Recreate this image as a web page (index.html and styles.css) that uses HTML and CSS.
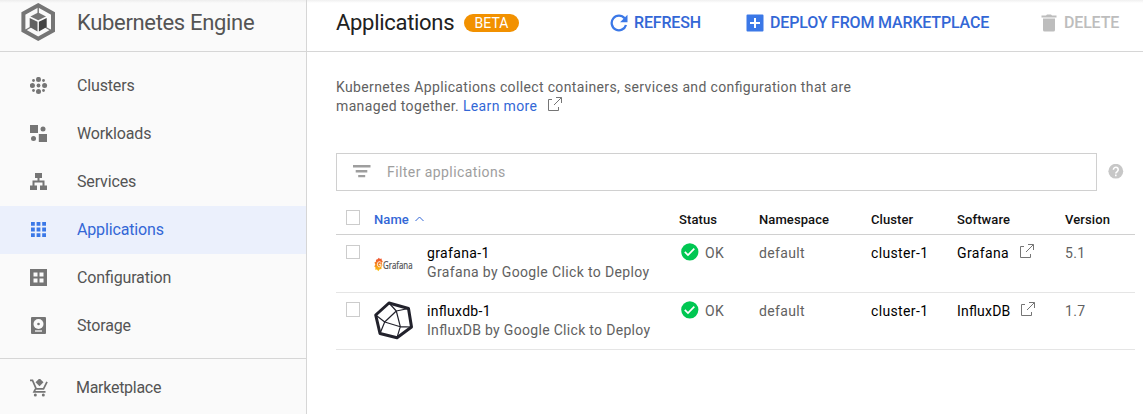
FILE: index.html
```html
<!DOCTYPE html>
<html lang="en">
<head>
<meta charset="utf-8">
<title>Kubernetes Engine</title>
<link rel="stylesheet" href="styles.css">
</head>
<body>
<svg width="0" height="0" class="defs">
  <symbol id="ext" viewBox="0 0 14 14"><path d="M4 2.500H.5v11h10V10M8 .5h5.500V6M13.300.7 6 8" fill="none" stroke="currentColor"/></symbol>
  <symbol id="ok" viewBox="0 0 18 18"><circle cx="8.800" cy="8.800" r="8.600" fill="#00c752"/><path d="m3.800 8.900 3.200 3.200 6.300-6.400" fill="none" stroke="#fff" stroke-width="1.700"/></symbol>
</svg>
<div class="app">
  <aside class="sidebar">
    <div class="product">
      <svg class="product-logo" width="34" height="38" viewBox="0 0 34 38">
        <path d="M17.200 2.300 32 10.500v17L17.200 35.700 2.400 27.500v-17z" fill="none" stroke="#757575" stroke-width="4"/>
        <path d="M17.200 3v8M3 28l7-4M31 28l-7-4" stroke="#757575" stroke-width="1.400"/>
        <path d="m17.200 9.500 7.800 4-7.800 3.800-7.800-3.800z" fill="#757575"/>
        <path d="m8.700 15 7.800 3.800v9.700L8.700 24z" fill="#616161"/>
        <path d="m25.700 15-7.800 3.800v9.700l7.800-4.500z" fill="#424242"/>
      </svg>
      <span class="product-name">Kubernetes Engine</span>
    </div>
    <nav class="nav">
      <a class="item"><svg class="icon" viewBox=".5 .5 18 18"><circle cx="9" cy="2.900" r="2.500"/><circle cx="9" cy="15.100" r="2.500"/><circle cx="2.900" cy="9" r="2.500"/><circle cx="15.100" cy="9" r="2.500"/><circle cx="9" cy="9" r="1.900"/><circle cx="4" cy="4" r="1.400"/><circle cx="14" cy="4" r="1.400"/><circle cx="4" cy="14" r="1.400"/><circle cx="14" cy="14" r="1.400"/></svg><span>Clusters</span></a>
      <a class="item"><svg class="icon" viewBox=".5 .5 18 18"><path d="M.5.500h8v8h-8zM9.300 9.500h8.200v8H9.300z"/><circle cx="13.500" cy="4.500" r="2.500"/><circle cx="4" cy="14" r="2.500"/></svg><span>Workloads</span></a>
      <a class="item"><svg class="icon" viewBox=".5 .5 18 18"><path d="M5.500.5h7v5H10V8h5v5h2.500v4.500h-7V13H13v-3H5v3h2.500v4.500h-7V13H3V8h5V5.500H5.500z"/></svg><span>Services</span></a>
      <a class="item active"><svg class="icon" viewBox=".5 .5 18 18"><path d="M1.500 1.500h3.800v3.800H1.500zM7.100 1.500h3.800v3.800H7.100zM12.700 1.500h3.800v3.800h-3.800zM1.500 7.100h3.800v3.800H1.500zM7.100 7.100h3.800v3.800H7.100zM12.700 7.100h3.800v3.800h-3.800zM1.500 12.700h3.800v3.800H1.500zM7.100 12.700h3.800v3.800H7.100zM12.700 12.700h3.800v3.800h-3.800z"/></svg><span>Applications</span></a>
      <a class="item"><svg class="icon" viewBox=".5 .5 18 18"><path fill-rule="evenodd" d="M.5.500h17v17H.5zM4 4v4h4V4zM10 4v4h4V4zM4 10v4h4v-4zM10 10v4h4v-4z"/></svg><span>Configuration</span></a>
      <a class="item"><svg class="icon" viewBox=".5 .5 18 18"><rect x="1.500" y=".5" width="15" height="17" rx="1"/><circle cx="9" cy="7.500" r="5" fill="#fafafa"/><circle cx="9" cy="7.500" r="1.300"/><path d="M5.500 14.500h7" stroke="#fafafa" stroke-width="1.300"/></svg><span>Storage</span></a>
    </nav>
    <div class="market">
      <a class="item"><svg class="icon" viewBox="0 .7 18 18"><path d="m9.500 0 4 4-4 4-4-4z"/><path d="M0 2h2.500l3.700 8.500h7.300L17 3.500M5.500 10.500 4 13.500h11.500" fill="none" stroke="currentColor" stroke-width="1.700"/><circle cx="5.300" cy="16.700" r="1.500"/><circle cx="13.300" cy="16.700" r="1.500"/></svg><span>Marketplace</span></a>
    </div>
  </aside>
  <main class="main">
    <header class="toolbar">
      <h1 class="title">Applications</h1>
      <span class="beta">BETA</span>
      <button class="action refresh"><svg class="icon" viewBox="0 0 18 18"><path d="M14.600 4.300A7.300 7.300 0 1 0 16 11" fill="none" stroke="currentColor" stroke-width="2.300"/><path d="M17.500.8v7.400h-7.400z"/></svg><span>REFRESH</span></button>
      <button class="action deploy"><svg class="icon" viewBox="0 0 18 18"><path fill-rule="evenodd" d="M1.500.5h15a1 1 0 0 1 1 1v15a1 1 0 0 1-1 1h-15a1 1 0 0 1-1-1v-15a1 1 0 0 1 1-1zM8 4v4H4v2h4v4h2v-4h4V8h-4V4z"/></svg><span>DEPLOY FROM MARKETPLACE</span></button>
      <button class="action delete" disabled><svg class="icon" viewBox="0 0 18 18"><path d="M1.500 1.500h4.500l1-1h4l1 1h4.500v2h-15zM3 4.500h12V16a1.600 1.600 0 0 1-1.600 1.600H4.600A1.600 1.600 0 0 1 3 16z"/></svg><span>DELETE</span></button>
    </header>
    <section class="content">
      <p class="intro">Kubernetes Applications collect containers, services and configuration that are<br>managed together. <a class="learn">Learn more</a><svg class="ext"><use href="#ext"/></svg></p>
      <div class="filter-row">
        <div class="filter"><svg class="icon" viewBox="0 0 18 18"><path d="M0 2h17.500v2.400H0zM2.700 7h11.600v2.400H2.700zM5.200 12h7v2.300h-7z"/></svg><span>Filter applications</span></div>
        <svg class="help" viewBox="0 0 16 16"><circle cx="7.800" cy="7.200" r="7.400" fill="#c7c7c7"/><path d="M5.400 5.700a2.400 2.400 0 1 1 3.700 2C8.100 8.300 7.800 8.600 7.800 9.600" fill="none" stroke="#fff" stroke-width="1.600"/><path d="M7 10.500h1.600v1.700H7z" fill="#fff"/></svg>
      </div>
      <div class="table">
        <div class="row head">
          <i class="check"></i>
          <span class="sorted">Name<svg class="caret" viewBox="0 0 9 6"><path d="m.5 5 4-4 4 4" fill="none" stroke="currentColor"/></svg></span>
          <span>Status</span><span>Namespace</span><span>Cluster</span><span>Software</span><span>Version</span>
        </div>
        <div class="row first">
          <i class="check"></i>
          <div class="name">
            <svg class="logo" viewBox="0 0 39 39">
              <defs><linearGradient id="flame" x1="0" y1="0" x2="0" y2="1"><stop offset="0" stop-color="#ed4b32"/><stop offset="1" stop-color="#fdc70d"/></linearGradient></defs>
              <g transform="translate(0 -.3) scale(1 1.080)"><path d="m3.500 14.300 1.400-1.300 1 1.200 1.700-.5.2 1.600 1 1-1 1.600.6 2.200-1 1.300.1 2-1.800.3-1.400 1.800-1.300-1.500-1.800.1.300-2L.3 21l1-1.700-.9-1.800 1.500-.7.100-2z" fill="url(#flame)"/>
              <path d="M7.100 17.500c-1-1.600-3.700-1-3.700 1.600 0 3 3.400 3 3.600.7.100-1.300-1.700-1.500-1.800-.1" fill="none" stroke="#fff" stroke-width=".9"/></g>
              <text class="wordmark" x="9" y="24.500" textLength="29.500" lengthAdjust="spacingAndGlyphs">Grafana</text>
            </svg>
            <div><div class="primary">grafana-1</div><div class="vendor">Grafana by Google Click to Deploy</div></div>
          </div>
          <span class="status"><svg class="ok raised"><use href="#ok"/></svg>OK</span>
          <span>default</span><span class="primary">cluster-1</span>
          <span class="primary">Grafana<svg class="ext"><use href="#ext"/></svg></span><span>5.1</span>
        </div>
        <div class="row">
          <i class="check"></i>
          <div class="name">
            <svg class="logo raised" viewBox="0 0 39 39"><g fill="none" stroke="#22222c" stroke-linejoin="round"><path d="M15 2 34.500 7.500 37.500 26 23 36.700 6 32.500 1.700 14z" stroke-width="3"/><path d="M15 2 22.300 10 34.500 7.500M22.300 10 10.700 21 1.700 14M22.300 10 26.300 25.700 37.500 26M10.700 21l15.600 4.700L23 36.700M10.700 21 6 32.500" stroke-width="1.200"/></g></svg>
            <div><div class="primary ligated">influxdb-1</div><div class="vendor ligated">InfluxDB by Google Click to Deploy</div></div>
          </div>
          <span class="status"><svg class="ok raised"><use href="#ok"/></svg>OK</span>
          <span>default</span><span class="primary">cluster-1</span>
          <span class="primary software">InfluxDB<svg class="ext"><use href="#ext"/></svg></span><span>1.7</span>
        </div>
      </div>
    </section>
  </main>
</div>
</body>
</html>
```
FILE: styles.css
```css
* { box-sizing: border-box; }
body { margin: 0; overflow: hidden; background: #fff; color: #616161; font: 14px/19px Roboto, sans-serif; letter-spacing: .36px; font-feature-settings: "liga" 1; }
.defs { position: absolute; }
.app { display: flex; height: 414px; }
.sidebar { width: 307px; flex: none; border-right: 1px solid #d6d6d6; background: linear-gradient(#ededed, #fafafa 3px); }
.product { display: flex; align-items: center; height: 52px; padding: 0 0 7px 21px; border-bottom: 1px solid #d6d6d6; }
.product-logo { flex: none; margin-right: 22px; }
.product-name { font-size: 22px; letter-spacing: -.33px; color: #545454; }
.nav { padding: 10px 0 8px; border-bottom: 1px solid #d6d6d6; }
.item { display: flex; align-items: center; height: 48px; padding-left: 30px; font-size: 16px; letter-spacing: -.15px; color: #545454; }
.item span { padding-bottom: 2px; }
.item .icon { margin-right: 29px; color: #757575; }
.icon { display: block; flex: none; width: 18px; height: 18px; fill: currentColor; }
.item.active { background: #ebf0fc; color: #3367d6; }
.item.active .icon { color: #3b78e7; }
.market { padding-top: 5px; }
.market .item .icon { margin-right: 28px; }
.market .item { letter-spacing: -.28px; }
.main { flex: 1; min-width: 0; }
.toolbar { display: flex; align-items: center; height: 52px; padding: 0 0 7px 29px; border-bottom: 1px solid #d6d6d6; background: linear-gradient(#f0f0f0, #fff 3px); }
.title { margin: 0; width: 118px; font-size: 22px; font-weight: 400; letter-spacing: -.3px; color: #212121; }
.beta { margin: 1px 0 0 10px; width: 55px; height: 18px; border-radius: 9px; background: #f29100; color: #fff; text-align: center; line-height: 18px; letter-spacing: 0; }
.action { display: flex; align-items: center; gap: 6px; padding: 1px 0 0; border: 0; background: none; color: #3367d6; font: 500 16px/20px Roboto, sans-serif; letter-spacing: -.17px; white-space: nowrap; }
.action .icon { color: #3b78e7; }
.refresh { width: 91px; margin-left: 91px; }
.deploy { width: 243px; margin-left: 45px; }
.delete { margin-left: 51px; color: #bdbdbd; }
.delete .icon { color: #bdbdbd; }
.content { padding: 26px 8px 0 29px; }
.intro { margin: 0; height: 75px; color: #616161; }
.learn { color: #3367d6; }
.ext { width: 14px; height: 14px; margin-left: 11px; color: #757575; }
.filter-row { display: flex; align-items: center; }
.filter { display: flex; align-items: center; width: 761px; height: 38px; padding-left: 16px; border: 1px solid #d0d0d0; color: #9e9e9e; letter-spacing: .42px; }
.filter .icon { margin-right: 16px; }
.help { width: 16px; height: 16px; margin-left: 11px; }
.table { width: 799px; }
.row { display: grid; grid-template-columns: 38px 305px 80px 112px 86px 108px 70px; height: 57px; padding-top: 9px; border-bottom: 1px solid #e5e5e5; }
.first { height: 58px; }
.head { height: 44px; padding-top: 19px; border-color: #d0d0d0; color: #111; font-size: 13px; font-weight: 500; letter-spacing: .1px; }
.check { width: 14px; height: 15px; margin-left: 10px; border: 1px solid #ccc; background: #fff; }
.first .check { height: 14px; margin-top: 1px; }
.sorted { color: #3367d6; }
.caret { width: 9px; height: 6px; margin: 0 0 2px 6px; }
.name { display: flex; }
.logo { width: 39px; height: 39px; margin-right: 14px; overflow: visible; }
.raised { margin-top: -1px; }
.wordmark { font: 10.5px "Open Sans", sans-serif; letter-spacing: 0; fill: #4d4d4f; stroke: #4d4d4f; stroke-width: .2; }
.primary { color: #000; }
.ligated { letter-spacing: .31px; }
.software { letter-spacing: .2px; }
.status { display: flex; }
.ok { width: 18px; height: 18px; margin-left: 2px; margin-right: 6px; }
```
